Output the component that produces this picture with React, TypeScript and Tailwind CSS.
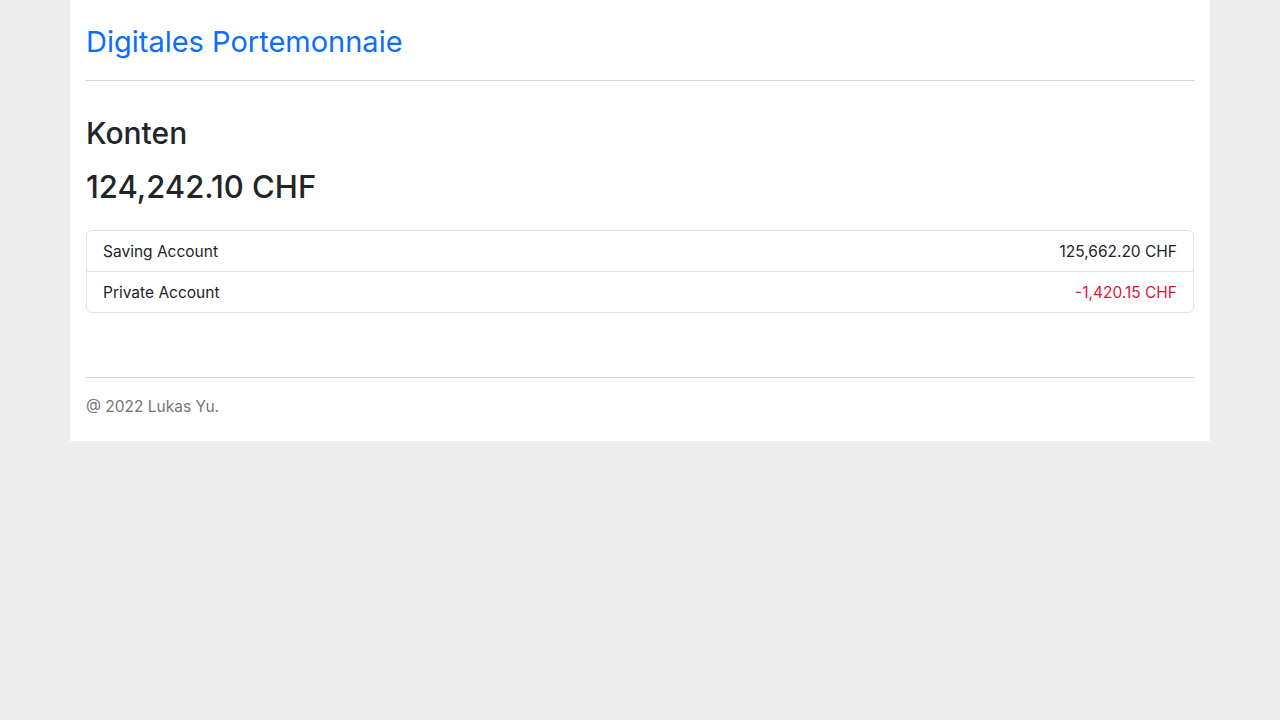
import React from 'react';

const accounts = [
  { name: 'Saving Account', balance: '125,662.20 CHF', negative: false },
  { name: 'Private Account', balance: '-1,420.15 CHF', negative: true },
];

export default function App() {
  return (
    <div className="min-h-[720px] bg-[#ededed] font-['Inter','Helvetica_Neue',sans-serif] text-[#212529]">
      <div className="mx-auto w-[1140px] bg-white px-4">
        <header className="pt-[24px] pb-[20px]">
          <a className="text-[29px] leading-[36px] text-[#0d6efd]" href="#">
            Digitales Portemonnaie
          </a>
        </header>
        <hr className="border-t border-[#d3d3d3]" />

        <main className="pt-[34px]">
          <h2 className="text-[30px] font-medium leading-[36px]">Konten</h2>
          <div className="mt-[17px] text-[31px] font-medium leading-[38px]">124,242.10 CHF</div>

          <ul className="mt-[24px] rounded-md border border-[#dee2e6]">
            {accounts.map((a, i) => (
              <li
                key={a.name}
                className={`flex items-center justify-between px-4 pt-[9px] pb-[7px] text-[15.5px] leading-6 ${i > 0 ? 'border-t border-[#dee2e6]' : ''}`}
              >
                <span>{a.name}</span>
                <span className={a.negative ? 'text-[#dc143c]' : ''}>{a.balance}</span>
              </li>
            ))}
          </ul>
        </main>

        <footer className="mt-[64px]">
          <hr className="border-t border-[#d3d3d3]" />
          <p className="pt-[17px] pb-[22px] text-[15.5px] leading-6 text-[#757575]">@ 2022 Lukas Yu.</p>
        </footer>
      </div>
    </div>
  );
}
